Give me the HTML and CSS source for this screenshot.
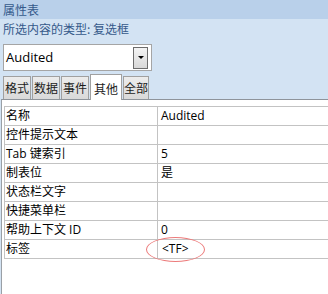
FILE: index.html
```html
<!DOCTYPE html>
<html>
<head>
<meta charset="utf-8">
<link rel="stylesheet" href="styles.css">
</head>
<body>
<div class="title">属性表</div>
<div class="type">所选内容的类型: 复选框</div>
<div class="combo">
  <span class="combo-text">Audited</span>
  <span class="combo-btn"><span class="arrow"></span></span>
</div>
<div class="tabs">
  <div class="tab">格式</div>
  <div class="tab">数据</div>
  <div class="tab">事件</div>
  <div class="tab active">其他</div>
  <div class="tab last">全部</div>
</div>
<div class="panel">
  <div class="grid">
    <div class="row"><div class="k">名称</div><div class="v">Audited</div></div>
    <div class="row"><div class="k">控件提示文本</div><div class="v"></div></div>
    <div class="row"><div class="k">Tab 键索引</div><div class="v">5</div></div>
    <div class="row"><div class="k">制表位</div><div class="v">是</div></div>
    <div class="row"><div class="k">状态栏文字</div><div class="v"></div></div>
    <div class="row"><div class="k">快捷菜单栏</div><div class="v"></div></div>
    <div class="row"><div class="k">帮助上下文 ID</div><div class="v">0</div></div>
    <div class="row"><div class="k">标签</div><div class="v"><span class="mark">&lt;TF&gt;</span></div></div>
  </div>
</div>
</body>
</html>
```
FILE: styles.css
```css
html, body {
  margin: 0;
  padding: 0;
}
body {
  width: 328px;
  height: 294px;
  overflow: hidden;
  background: #d3e3f3;
  font-family: "Open Sans", "Noto Sans CJK SC", sans-serif;
  font-size: 12px;
  color: #000;
}
.title {
  height: 19px;
  line-height: 19px;
  background: #b9d0ea;
  color: #35598a;
  padding-left: 3px;
  font-family: "Noto Sans CJK SC", sans-serif;
}
.type {
  height: 19px;
  line-height: 19px;
  margin-top: 0px;
  color: #35598a;
  padding-left: 3px;
  font-family: "Noto Sans CJK SC", sans-serif;
}
.combo {
  margin: 6px 0 0 3px;
  width: 147px;
  height: 25px;
  border: 1px solid #a5a5a5;
  background: #fff;
  display: flex;
  align-items: center;
  justify-content: space-between;
}
.combo-text {
  padding-left: 2px;
  font-size: 13px;
  line-height: 25px;
}
.combo-btn {
  width: 13px;
  height: 20px;
  margin-right: 3px;
  border: 1px solid #6d6d6d;
  background: linear-gradient(#f4f4f4, #d8d8d8);
  display: flex;
  align-items: center;
  justify-content: center;
}
.arrow {
  width: 0;
  height: 0;
  border-left: 3px solid transparent;
  border-right: 3px solid transparent;
  border-top: 3px solid #000;
}
.tabs {
  display: flex;
  align-items: flex-end;
  margin-top: 3px;
  padding-left: 3px;
  height: 25px;
  position: relative;
  z-index: 1;
}
.tab {
  height: 22px;
  line-height: 22px;
  padding: 0 1px;
  margin-right: 1px;
  border: 1px solid #a0a0a0;
  border-bottom: none;
  background: linear-gradient(#ececec, #d9d9d9);
  font-family: "Noto Sans CJK SC", sans-serif;
  color: #1c1c1c;
}
.tab.active {
  height: 25px;
  line-height: 27px;
  padding: 0 3px;
  background: #fff;
  margin-bottom: -1px;
}
.tab.last {
  padding: 0;
}
.panel {
  background: #fff;
  border-top: 1px solid #8e949b;
  border-left: 1px solid #9aa0a6;
  margin-left: 1px;
  padding: 6px 0 40px 2px;
}
.grid {
  border-top: 1px solid #c3c3c3;
  border-left: 1px solid #c3c3c3;
}
.row {
  display: flex;
  height: 18px;
  border-bottom: 1px solid #c3c3c3;
}
.k {
  width: 151px;
  border-right: 1px solid #c3c3c3;
  padding-left: 1px;
  line-height: 18px;
  font-family: "Open Sans", "Noto Sans CJK SC", sans-serif;
}
.v {
  flex: 1;
  padding-left: 3px;
  line-height: 18px;
  position: relative;
}
.mark {
  position: relative;
  padding-left: 1px;
}
.mark::after {
  content: "";
  position: absolute;
  left: -15px;
  top: -3px;
  width: 57px;
  height: 23px;
  border: 1px solid #ec7a7a;
  border-radius: 50%;
}
```
